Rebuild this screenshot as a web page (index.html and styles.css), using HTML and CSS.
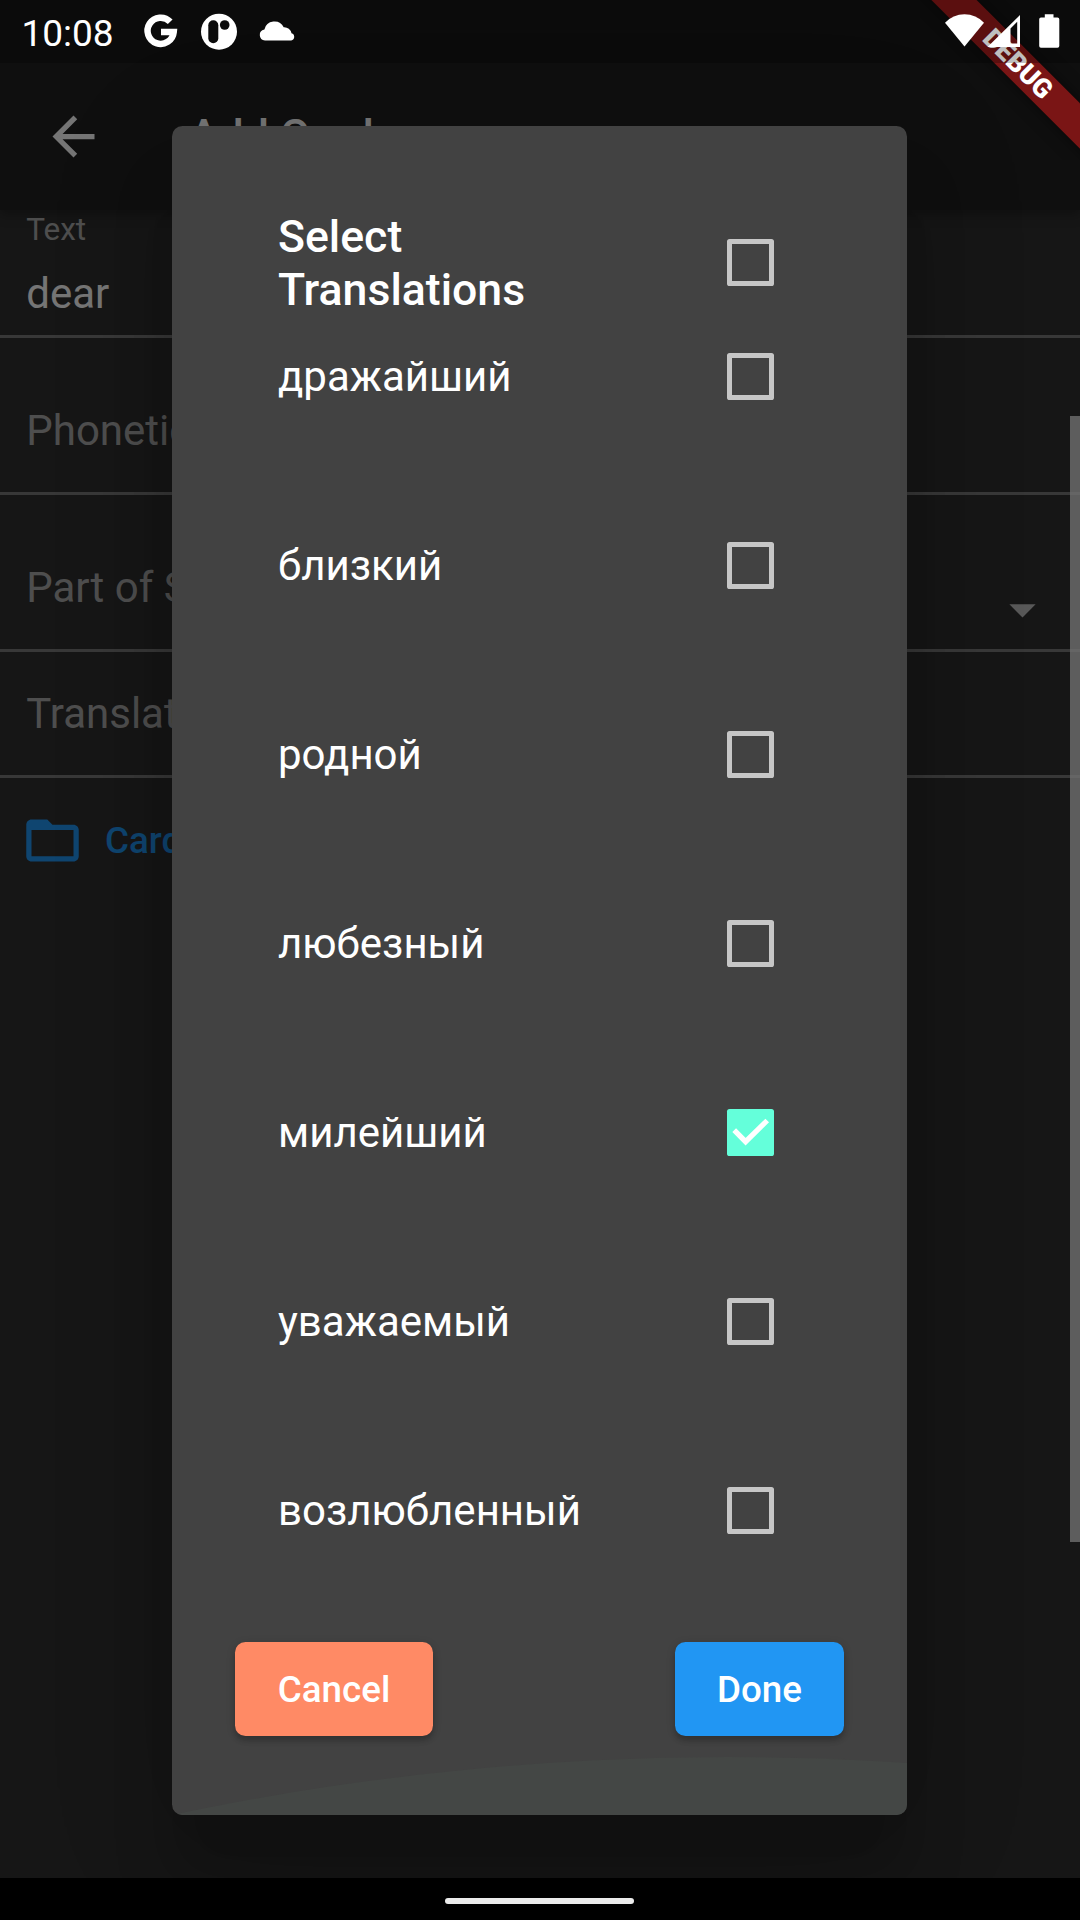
FILE: index.html
```html
<!DOCTYPE html>
<html lang="en">
<head>
<meta charset="utf-8">
<title>Add Card</title>
<link rel="stylesheet" href="styles.css">
</head>
<body>
<div class="screen">
  <header class="app-bar">
    <svg class="icon" viewBox="0 0 24 24"><path d="M20 11H7.83l5.59-5.59L12 4l-8 8 8 8 1.41-1.41L7.83 13H20v-2z"/></svg>
    <h1 class="app-title">Add Card</h1>
  </header>
  <main class="form">
    <div class="field field-filled"><span class="field-label">Text</span><span class="field-value">dear</span></div>
    <div class="field"><span class="field-hint">Phonetics</span></div>
    <div class="field"><span class="field-hint">Part of Speech</span><svg class="icon dropdown" viewBox="0 0 24 24"><path d="M7 10l5 5 5-5z"/></svg></div>
    <div class="field field-short"><span class="field-hint">Translations</span></div>
    <div class="card-action">
      <svg class="icon" viewBox="0 0 24 24"><path d="M20 6h-8l-2-2H4c-1.1 0-1.99.9-1.99 2L2 18c0 1.1.9 2 2 2h16c1.1 0 2-.9 2-2V8c0-1.1-.9-2-2-2zm0 12H4V8h16v10z"/></svg>
      <span>Card</span>
    </div>
    <div class="scrollbar"></div>
  </main>
  <nav class="nav-bar"><div class="handle"></div></nav>

  <div class="barrier">
    <section class="dialog">
      <svg class="ripple" viewBox="0 0 735 60"><circle cx="555" cy="2692" r="2690"/></svg>
      <div class="row dialog-header"><h2>Select Translations</h2><span class="box"></span></div>
      <div class="list">
        <div class="row"><span>дражайший</span><span class="box"></span></div>
        <div class="row"><span>близкий</span><span class="box"></span></div>
        <div class="row"><span>родной</span><span class="box"></span></div>
        <div class="row"><span>любезный</span><span class="box"></span></div>
        <div class="row"><span>милейший</span><span class="box checked"><svg viewBox="0 0 47 47"><path d="M7.200 21.200L18.600 32.700L40.200 11.500"/></svg></span></div>
        <div class="row"><span>уважаемый</span><span class="box"></span></div>
        <div class="row"><span>возлюбленный</span><span class="box"></span></div>
      </div>
      <div class="actions">
        <button class="button cancel">Cancel</button>
        <button class="button done">Done</button>
      </div>
    </section>
  </div>

  <div class="banner-area"><div class="banner">DEBUG</div></div>

  <div class="status-bar">
    <span class="time">10:08</span>
    <svg class="status-icons" viewBox="0 0 160 63" width="160" height="63">
      <path class="g-ring" d="M30.200 21.800A13.100 13.100 0 1 0 33.700 32.100H21"/>
      <circle cx="79" cy="31.700" r="18"/>
      <rect class="cut" x="68.300" y="20.300" width="10" height="23" rx="5"/>
      <circle class="cut" cx="84.700" cy="25" r="4.800"/>
      <path d="M125 40.500a5.600 5.600 0 0 1-.6-11.100a10.300 10.300 0 0 1 19.300-2.200a7.300 7.300 0 0 1 7.800 6.100a3.700 3.700 0 0 1-.3 7.200z"/>
    </svg>
    <svg class="system-icons" viewBox="0 0 120 63" width="120" height="63">
      <path d="M5 22.800Q13 14.300 24.500 14.300Q36 14.300 44 22.800L24.500 46.500z"/>
      <path fill-rule="evenodd" d="M80 15V47H47.500zM70.500 28.500V43.500H77.200V21.800z"/>
      <path d="M104.800 14.300h8.700v3.200h4a1.800 1.800 0 0 1 1.800 1.800v26.700a1.800 1.800 0 0 1-1.800 1.800h-16.500a1.800 1.800 0 0 1-1.800-1.800v-26.700a1.800 1.800 0 0 1 1.800-1.800h3.800z"/>
    </svg>
  </div>
</div>
</body>
</html>
```
FILE: styles.css
```css
* { box-sizing: border-box; }
body { margin: 0; background: #000; }
h1, h2 { margin: 0; font-weight: 500; }

.screen {
  position: relative;
  width: 1080px;
  height: 1920px;
  overflow: hidden;
  display: grid;
  grid-template-rows: 210px 1fr 42px;
  background: #303030;
  color: #fff;
  font-family: Roboto, "Liberation Sans", sans-serif;
  font-size: 42px;
  line-height: 49.2px;
}
.icon { width: 63px; height: 63px; fill: currentColor; flex: none; }

.app-bar {
  position: relative;
  display: flex;
  align-items: center;
  gap: 84px;
  padding: 63px 42px 0;
  background: #212121;
  box-shadow: 0 3px 12px rgba(0, 0, 0, .35);
}
.app-title { font-size: 44.6px; line-height: 53px; }

.form { position: relative; }
.field {
  display: flex;
  align-items: center;
  height: 157px;
  padding: 31px 26.25px 0;
  border-bottom: 3px solid #7a7a7a;
}
.field-filled {
  height: 128px;
  padding-top: 0;
  flex-direction: column;
  align-items: flex-start;
}
.field-short { height: 126px; padding-top: 0; }
.field-label { font-size: 31.5px; line-height: 37px; margin-top: 1px; color: rgba(255, 255, 255, .6); }
.field-value { margin-top: 21px; }
.field-hint { color: rgba(255, 255, 255, .6); }
.dropdown { margin-left: auto; margin-top: 44px; color: rgba(255, 255, 255, .7); }
.card-action {
  display: flex;
  align-items: center;
  gap: 21px;
  padding: 30.5px 21px;
  color: #2196f3;
  font-size: 36.75px;
  font-weight: 500;
}
.card-action span { padding-top: 2px; }
.scrollbar {
  position: absolute;
  right: 0;
  top: 206px;
  width: 10.5px;
  height: 1126px;
  background: rgba(255, 255, 255, .745);
}

.nav-bar { position: relative; z-index: 2; display: flex; justify-content: center; padding: 20px 2px 0 0; background: #000; }
.handle { width: 189px; height: 6px; border-radius: 3px; background: #ebebeb; }

.barrier {
  position: absolute;
  inset: 0;
  padding-top: 126px;
  background: rgba(0, 0, 0, .54);
}
.dialog {
  position: relative;
  width: 735px;
  height: 1689px;
  margin-left: 172.4px;
  padding: 84px 63px 0;
  overflow: hidden;
  border-radius: 10.5px;
  background: #424242;
  box-shadow: 0 63px 60px 0 rgba(0, 0, 0, .2), 0 24px 121px 10px rgba(0, 0, 0, .12);
}
.ripple { position: absolute; left: 0; bottom: 0; width: 735px; height: 60px; fill: #444745; }
.row {
  display: flex;
  align-items: center;
  justify-content: space-between;
  height: 123px;
  padding: 0 70.4px 0 42.6px;
}
.dialog-header { height: 105px; }
.dialog-header h2 { width: 300px; padding-top: 2px; font-size: 44.6px; line-height: 53px; }
.list { display: grid; gap: 66px; }
.box { width: 47px; height: 47px; border: 5.25px solid #c6c6c6; border-radius: 2.6px; }
.box.checked { border: 0; background: #64ffda; }
.box svg { display: block; width: 47px; height: 47px; fill: none; stroke: #fff; stroke-width: 5.25px; }
.actions { position: relative; display: flex; justify-content: space-between; margin-top: 69.5px; }
.button {
  height: 94.5px;
  padding: 2px 42.4px 0;
  border: 0;
  border-radius: 10.5px;
  color: #fff;
  font: 500 36.75px/43px Roboto, "Liberation Sans", sans-serif;
  box-shadow: 0 5px 5px rgba(0, 0, 0, .16), 0 2px 10px rgba(0, 0, 0, .14);
}
.cancel { background: #ff8a65; }
.done { background: #2196f3; }

.banner-area { position: absolute; top: 0; right: 0; width: 160px; height: 160px; overflow: hidden; }
.banner {
  position: absolute;
  left: -52.5px;
  top: 47.5px;
  width: 300px;
  height: 32px;
  transform: rotate(45deg);
  background: #7a1515;
  box-shadow: 0 0 16px rgba(0, 0, 0, .5);
  text-align: center;
  font-size: 26.8px;
  font-weight: 900;
  line-height: 32px;
}

.status-bar {
  position: absolute;
  inset: 0 0 auto;
  height: 63px;
  display: flex;
  align-items: center;
  padding: 0 20px 0 21.5px;
  background: rgba(0, 0, 0, .25);
}
.time { width: 118.5px; font-size: 37px; line-height: 43px; margin-top: 3px; }
.status-icons, .system-icons { fill: #fff; }
.system-icons { margin-left: auto; }
.g-ring { fill: none; stroke: #fff; stroke-width: 6.5px; }
.cut { fill: #0b0b0b; }
```
